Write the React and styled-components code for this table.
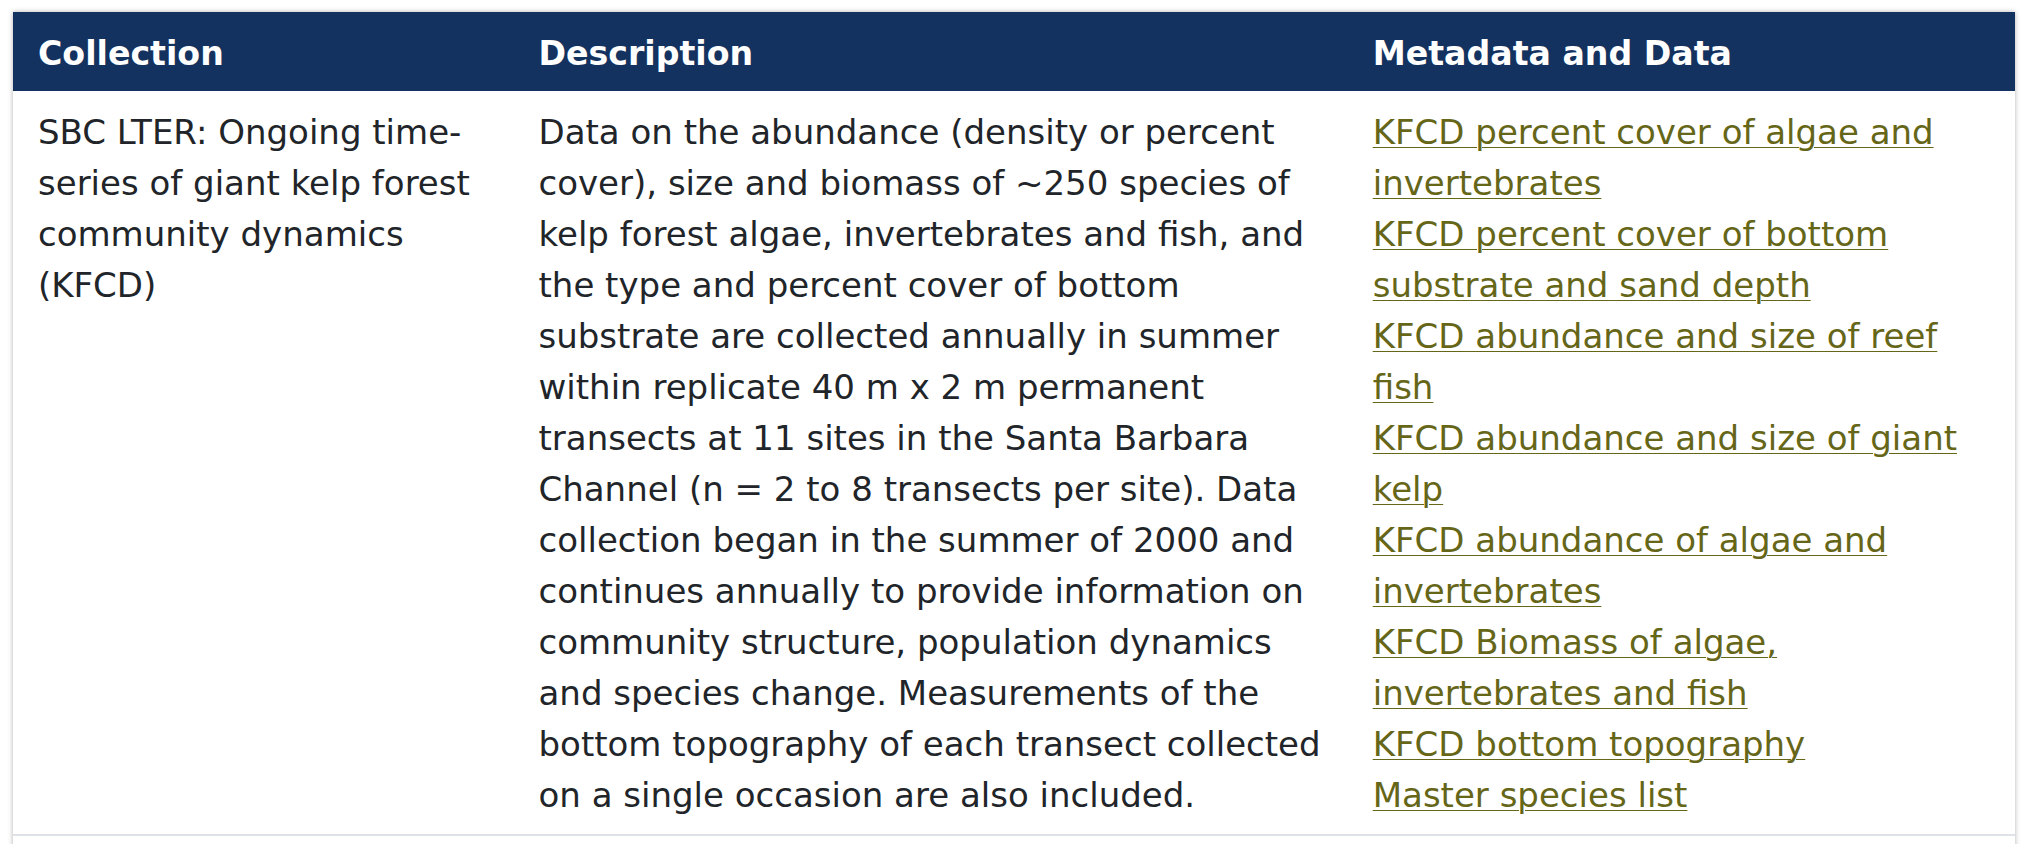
import styled, { createGlobalStyle } from "styled-components";

const GlobalStyle = createGlobalStyle`
    html, body {
        margin: 0;
        padding: 0;
        background: #fff;
    }
    body {
        font-family: "DejaVu Sans", Verdana, sans-serif;
        color: #212529;
    }
    *, *::before, *::after {
        box-sizing: border-box;
    }
`;

const Page = styled.div`
    padding: 12px 11px 0 13px;
    height: 844px;
    overflow: hidden;
`;

const Table = styled.table`
    width: 100%;
    border-collapse: collapse;
    table-layout: fixed;
    background: #fff;
    box-shadow: 0 0 5px rgba(0, 0, 0, 0.3);
`;

const HeadCell = styled.th`
    width: ${(props) => props.width};
    background: #14325f;
    color: #fff;
    text-align: left;
    font-weight: bold;
    font-size: 33.2px;
    line-height: 51px;
    padding: 16px 25px 12px;
`;

const Cell = styled.td`
    vertical-align: top;
    font-size: 34px;
    line-height: 51px;
    padding: 16px 25px 13px;
    border-bottom: 2px solid #dee2e6;
`;

const LinkList = styled.div`
    display: flex;
    flex-direction: column;
`;

const DataLink = styled.a`
    color: #666619;
    text-decoration: underline;
    text-decoration-thickness: 1px;
    text-underline-offset: 3px;
`;

const SpacerRow = styled.tr`
    height: 60px;
`;

const links = [
    "KFCD percent cover of algae and invertebrates",
    "KFCD percent cover of bottom substrate and sand depth",
    "KFCD abundance and size of reef fish",
    "KFCD abundance and size of giant kelp",
    "KFCD abundance of algae and invertebrates",
    "KFCD Biomass of algae, invertebrates and fish",
    "KFCD bottom topography",
    "Master species list",
];

function App() {
    return (
        <>
            <GlobalStyle />
            <Page>
                <Table>
                    <thead>
                        <tr>
                            <HeadCell width="25%">Collection</HeadCell>
                            <HeadCell width="41.67%">Description</HeadCell>
                            <HeadCell width="33.33%">Metadata and Data</HeadCell>
                        </tr>
                    </thead>
                    <tbody>
                        <tr>
                            <Cell>
                                SBC LTER: Ongoing time-series of giant kelp forest community dynamics (KFCD)
                            </Cell>
                            <Cell>
                                Data on the abundance (density or percent cover), size and biomass of ~250
                                species of kelp forest algae, invertebrates and fish, and the type and percent
                                cover of bottom substrate are collected annually in summer within replicate
                                40 m x 2 m permanent transects at 11 sites in the Santa Barbara Channel (n = 2
                                to 8 transects per site). Data collection began in the summer of 2000 and
                                continues annually to provide information on community structure, population
                                dynamics and species change. Measurements of the bottom topography of each
                                transect collected on a single occasion are also included.
                            </Cell>
                            <Cell>
                                <LinkList>
                                    {links.map((text) => (
                                        <span key={text}>
                                            <DataLink href="#">{text}</DataLink>
                                        </span>
                                    ))}
                                </LinkList>
                            </Cell>
                        </tr>
                        <SpacerRow>
                            <td />
                            <td />
                            <td />
                        </SpacerRow>
                    </tbody>
                </Table>
            </Page>
        </>
    );
}

export default App;
